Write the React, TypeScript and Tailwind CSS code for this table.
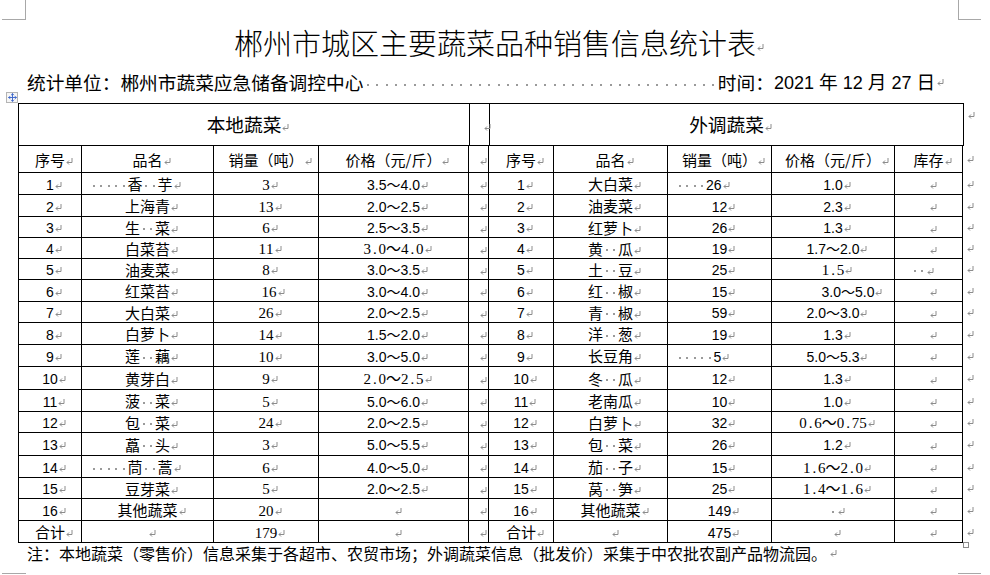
import React from "react";
import { Move } from "lucide-react";

// [text, kind, extra classes]  kind: c = 中文, n = 西文数字, s = 宋体数字
type Kind = "c" | "n" | "s";
type CellSpec = [string, Kind?, string?];

const colW = [
  "w-[64px]",
  "w-[132px]",
  "w-[105px]",
  "w-[150px]",
  "w-[20px]",
  "w-[65px]",
  "w-[114px]",
  "w-[104px]",
  "w-[123px]",
  "w-[68px]",
];

const rowH = [
  "h-[22px]", "h-[22px]", "h-[21px]", "h-[21px]", "h-[21px]", "h-[22px]",
  "h-[21px]", "h-[22px]", "h-[22px]", "h-[23px]", "h-[22px]", "h-[21px]",
  "h-[23px]", "h-[22px]", "h-[21px]", "h-[22px]", "h-[22px]",
];

const local: CellSpec[][] = [
  [["1"], ["     香  芋", "c", "justify-start pl-[8px]"], ["3", "s"], ["3.5～4.0"]],
  [["2"], ["上海青"], ["13", "s"], ["2.0～2.5"]],
  [["3"], ["生  菜"], ["6", "s"], ["2.5～3.5"]],
  [["4"], ["白菜苔"], ["11", "s"], ["3.0～4.0", "s"]],
  [["5"], ["油麦菜"], ["8", "s"], ["3.0～3.5"]],
  [["6"], ["红菜苔"], ["16", "s", "pl-[6px]"], ["3.0～4.0"]],
  [["7"], ["大白菜"], ["26", "s"], ["2.0～2.5"]],
  [["8"], ["白萝卜"], ["14", "s"], ["1.5～2.0"]],
  [["9"], ["莲  藕"], ["10", "s"], ["3.0～5.0"]],
  [["10"], ["黄芽白"], ["9", "s"], ["2.0～2.5", "s"]],
  [["11"], ["菠  菜"], ["5", "s"], ["5.0～6.0"]],
  [["12"], ["包  菜"], ["24", "s"], ["2.0～2.5"]],
  [["13"], ["藠  头"], ["3", "s"], ["5.0～5.5"]],
  [["14"], ["     茼  蒿", "c", "justify-start pl-[8px]"], ["6", "s"], ["4.0～5.0"]],
  [["15"], ["豆芽菜"], ["5", "s"], ["2.0～2.5"]],
  [["16"], ["其他蔬菜"], ["20", "s"], [""]],
  [["合计"], [""], ["179", "s"], [""]],
];

const outside: CellSpec[][] = [
  [["1"], ["大白菜"], ["    26", "n", "justify-start pl-[8px]"], ["1.0"], [""]],
  [["2"], ["油麦菜"], ["12"], ["2.3"], [""]],
  [["3"], ["红萝卜"], ["26"], ["1.3"], [""]],
  [["4"], ["黄  瓜"], ["19"], ["1.7～2.0"], [""]],
  [["5"], ["土  豆"], ["25"], ["1.5", "s"], ["  ", "c", "pr-[20px]"]],
  [["6"], ["红  椒"], ["15"], ["3.0～5.0", "n", "pl-[30px]"], [""]],
  [["7"], ["青  椒"], ["59"], ["2.0～3.0"], [""]],
  [["8"], ["洋  葱"], ["19"], ["1.3"], [""]],
  [["9"], ["长豆角"], ["     5", "n", "justify-start pl-[8px]"], ["5.0～5.3"], [""]],
  [["10"], ["冬  瓜"], ["12"], ["1.3"], [""]],
  [["11"], ["老南瓜"], ["10"], ["1.0"], [""]],
  [["12"], ["白萝卜"], ["32"], ["0.6～0.75", "s"], [""]],
  [["13"], ["包  菜"], ["26"], ["1.2"], [""]],
  [["14"], ["茄  子"], ["15"], ["1.6～2.0", "s"], [""]],
  [["15"], ["莴  笋"], ["25"], ["1.4～1.6", "s"], [""]],
  [["16"], ["其他蔬菜"], ["149"], [" "], [""]],
  [["合计"], [""], ["475"], [""], [""]],
];

// Word 的段落标记
const Mark = ({ className = "" }: { className?: string }) => (
  <svg width="7" height="7" viewBox="0 0 7 7" className={`inline-block shrink-0 ${className}`}>
    <path d="M6 0V4.5H1M3 2.5L1 4.5L3 6.5" fill="none" stroke="#8c8c8c" strokeWidth="1" />
  </svg>
);

// 显示为空格标记的小圆点
const Dot = ({ w = "w-[7.5px]" }: { w?: string }) => (
  <span className={`inline-flex ${w} h-[2px] justify-center align-middle`}>
    <span className="h-[2px] w-[2px] bg-[#9a9a9a]" />
  </span>
);

function guessKind(text: string): Kind {
  return /^[\d.～ ]+$/.test(text) && text.trim() !== "" ? "n" : "c";
}

function Content({ spec }: { spec: CellSpec }) {
  const [text, k] = spec;
  const kind = k ?? guessKind(text);
  const chars = Array.from(text);

  let body: React.ReactNode;
  if (kind === "s") {
    body = (
      <span className="font-['Liberation_Serif','Noto_Sans_CJK_SC',serif] text-[15px]">
        {chars.map((ch, i) =>
          ch === " " ? (
            <Dot key={i} />
          ) : (
            <span key={i} className={`inline-block text-center ${ch === "～" ? "w-[15px]" : "w-[7.5px]"}`}>
              {ch}
            </span>
          )
        )}
      </span>
    );
  } else {
    const cls =
      kind === "n"
        ? "font-['Liberation_Sans','Noto_Sans_CJK_SC',sans-serif] text-[14px]"
        : "font-['Noto_Sans_CJK_SC',sans-serif] text-[15px]";
    const parts: React.ReactNode[] = [];
    let buf = "";
    chars.forEach((ch, i) => {
      if (ch === " ") {
        if (buf) parts.push(buf);
        buf = "";
        parts.push(<Dot key={i} />);
      } else {
        buf += ch;
      }
    });
    if (buf) parts.push(buf);
    body = <span className={cls}>{parts}</span>;
  }

  return (
    <span className="whitespace-nowrap leading-[18px]">
      {body}
      <Mark className="ml-[1px] -mr-[8px]" />
    </span>
  );
}

function Cell({ spec, col, first }: { spec: CellSpec; col: number; first?: boolean }) {
  const extra = spec[2] ?? "justify-center";
  const align = extra.includes("justify-start") ? extra : `justify-center ${extra}`;
  return (
    <div
      className={`flex items-center ${align} ${colW[col]} h-full border-r border-b border-black ${
        first ? "border-l" : ""
      }`}
    >
      <Content spec={spec} />
    </div>
  );
}

function RowEnd({ top }: { top?: boolean }) {
  return (
    <div className={`flex h-full w-[20px] pl-[4px] ${top ? "items-start pt-[9px]" : "items-center"}`}>
      <Mark />
    </div>
  );
}

export default function App() {
  const head2L = ["序号", "品名", "销量（吨）", "价格（元/斤）"];
  const head2R = ["序号", "品名", "销量（吨）", "价格（元/斤）", "库存"];

  return (
    <div className="relative h-[575px] w-[990px] overflow-hidden bg-white text-black font-['Noto_Sans_CJK_SC',sans-serif]">
      {/* 页面角标 */}
      <div className="absolute left-[2px] top-[19px] h-px w-[24px] bg-[#a8a8a8]" />
      <div className="absolute left-[25px] top-0 h-[20px] w-px bg-[#a8a8a8]" />
      <div className="absolute left-[958px] top-[19px] h-px w-[23px] bg-[#a8a8a8]" />
      <div className="absolute left-[958px] top-0 h-[20px] w-px bg-[#a8a8a8]" />
      <div className="absolute left-[2px] top-[573px] h-px w-[24px] bg-[#a8a8a8]" />
      <div className="absolute left-[958px] top-[573px] h-px w-[23px] bg-[#a8a8a8]" />

      {/* 表格移动句柄 / 缩放句柄 */}
      <div className="absolute left-[6px] top-[92px] flex h-[11px] w-[12px] items-center justify-center border border-[#b4b4b4] bg-[#f6f6f6]">
        <Move size={9} strokeWidth={2.5} color="#3a63c9" />
      </div>
      <div className="absolute left-[963px] top-[542px] h-[6px] w-[6px] border border-[#8c8c8c] bg-white" />

      {/* 标题 */}
      <div className="mt-[24px] flex h-[36px] items-center justify-center">
        <span className="text-[29px] font-light leading-[36px] whitespace-nowrap">
          郴州市城区主要蔬菜品种销售信息统计表
          <Mark className="ml-[1px] -mr-[8px]" />
        </span>
      </div>

      {/* 统计单位 / 时间 */}
      <div className="mt-[9px] flex h-[26px] items-center pl-[27px] whitespace-nowrap">
        <span className="text-[18.7px]">统计单位：郴州市蔬菜应急储备调控中心</span>
        <span className="text-[18.7px]">
          {Array.from({ length: 38 }).map((_, i) => (
            <Dot key={i} w="w-[9.33px]" />
          ))}
        </span>
        <span className="text-[18.7px]">时间：</span>
        <span className="font-['Liberation_Sans','Noto_Sans_CJK_SC',sans-serif] text-[18px]">
          2021 <span className="font-['Noto_Sans_CJK_SC',sans-serif] text-[18.7px]">年</span> 12{" "}
          <span className="font-['Noto_Sans_CJK_SC',sans-serif] text-[18.7px]">月</span> 27{" "}
          <span className="font-['Noto_Sans_CJK_SC',sans-serif] text-[18.7px]">日</span>
        </span>
        <Mark className="ml-[2px]" />
      </div>

      {/* 表格 */}
      <div className="mt-[8px] ml-[18px]">
        <div className="flex h-[43px]">
          <div className="flex h-full w-[452px] items-center justify-center border-t border-l border-r border-b border-black">
            <span className="whitespace-nowrap text-[18.7px]">
              本地蔬菜
              <Mark className="ml-[1px] -mr-[8px]" />
            </span>
          </div>
          <div className="flex h-full w-[20px] items-center justify-center border-t border-r border-b border-black">
            <span className="pl-[8px]">
              <Mark className="-mr-[8px]" />
            </span>
          </div>
          <div className="flex h-full w-[474px] items-center justify-center border-t border-r border-b border-black">
            <span className="whitespace-nowrap text-[18.7px]">
              外调蔬菜
              <Mark className="ml-[1px] -mr-[8px]" />
            </span>
          </div>
          <RowEnd top />
        </div>

        <div className="flex h-[27px]">
          {head2L.map((t, i) => (
            <Cell key={`l${i}`} spec={[t, "c"]} col={i} first={i === 0} />
          ))}
          <Cell spec={["", "c"]} col={4} />
          {head2R.map((t, i) => (
            <Cell key={`r${i}`} spec={[t, "c"]} col={i + 5} />
          ))}
          <RowEnd />
        </div>

        {local.map((row, r) => (
          <div key={r} className={`flex ${rowH[r]}`}>
            {row.map((spec, i) => (
              <Cell key={`l${i}`} spec={spec} col={i} first={i === 0} />
            ))}
            <Cell spec={["", "c"]} col={4} />
            {outside[r].map((spec, i) => (
              <Cell key={`r${i}`} spec={spec} col={i + 5} />
            ))}
            <RowEnd />
          </div>
        ))}
      </div>

      {/* 注 */}
      <div className="flex h-[20px] items-center pl-[27px] whitespace-nowrap">
        <span className="text-[16px]">
          注：本地蔬菜（零售价）信息采集于各超市、农贸市场；外调蔬菜信息（批发价）采集于中农批农副产品物流园。
        </span>
        <Mark className="ml-[3px]" />
      </div>
    </div>
  );
}
